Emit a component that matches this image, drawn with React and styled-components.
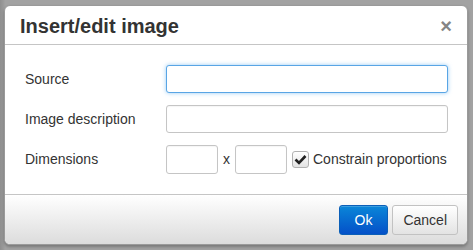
import React from "react";
import styled, { createGlobalStyle } from "styled-components";

const Global = createGlobalStyle`
  html, body {
    margin: 0;
    padding: 0;
    background: #a2a2a2;
    font-family: "Liberation Sans", Arial, sans-serif;
  }
`;

const Page = styled.div`
  width: 473px;
  height: 250px;
  overflow: hidden;
  display: flex;
  background: linear-gradient(to right, #8f8f8f 0, #9c9c9c 4px, #a2a2a2 5px);
`;

const Dialog = styled.div`
  margin: 5px 0 0 4px;
  width: 464px;
  height: 240px;
  box-sizing: border-box;
  background: #fff;
  border: 1px solid #9a9a9a;
  border-radius: 6px;
  box-shadow: 0 2px 3px rgba(0, 0, 0, 0.25);
  display: flex;
  flex-direction: column;
  overflow: hidden;
`;

const Header = styled.div`
  height: 38px;
  flex: none;
  display: flex;
  align-items: center;
  justify-content: space-between;
  padding: 0 15px 0 15px;
  border-bottom: 1px solid #c5c5c5;
`;

const Title = styled.div`
  font-size: 20px;
  font-weight: bold;
  color: #333;
  margin-top: 2px;
`;

const Close = styled.div`
  font-size: 20px;
  font-weight: bold;
  color: #858585;
  line-height: 1;
  margin-top: 2px;
`;

const Body = styled.div`
  flex: 1;
  padding: 20px 19px 0 20px;
  display: flex;
  flex-direction: column;
  gap: 12px;
`;

const Row = styled.div`
  display: flex;
  align-items: center;
  height: 28px;
  white-space: nowrap;
`;

const Label = styled.div`
  width: 141px;
  flex: none;
  font-size: 14px;
  color: #333;
`;

const Input = styled.div`
  box-sizing: border-box;
  height: ${(p) => (p.$tall ? 29 : 28)}px;
  width: ${(p) => (p.$w ? `${p.$w}px` : "auto")};
  flex: ${(p) => (p.$w ? "none" : 1)};
  border: 1px solid ${(p) => (p.$focus ? "#59a5e5" : "#c5c5c5")};
  border-radius: 3px;
  background: #fff;
  box-shadow: ${(p) =>
    p.$focus ? "0 0 4px rgba(82, 168, 236, 0.6)" : "inset 0 1px 1px rgba(0,0,0,0.04)"};
`;

const Times = styled.span`
  flex: none;
  font-size: 14px;
  color: #333;
  margin: 0 5px 0 5px;
`;

const Check = styled.div`
  flex: none;
  box-sizing: border-box;
  width: 17px;
  height: 17px;
  margin-left: 5px;
  border: 1px solid #b1b1b1;
  border-radius: 3px;
  background: linear-gradient(#fff, #e3e3e3);
  display: flex;
  align-items: center;
  justify-content: center;
`;

const CheckText = styled.span`
  flex: none;
  font-size: 14px;
  color: #333;
  margin-left: 4px;
`;

const Footer = styled.div`
  height: 50px;
  flex: none;
  box-sizing: border-box;
  border-top: 1px solid #c5c5c5;
  background: linear-gradient(#fff, #dcdcdc);
  display: flex;
  justify-content: flex-end;
  align-items: flex-start;
  padding: 10px 9px 0 0;
  gap: 4px;
`;

const Button = styled.div`
  box-sizing: border-box;
  height: 30px;
  padding: 0 ${(p) => (p.$primary ? 15 : 10)}px;
  display: flex;
  align-items: center;
  font-size: 14px;
  border-radius: 3px;
  border: 1px solid ${(p) => (p.$primary ? "#0b5fb8" : "#c2c2c2")};
  color: ${(p) => (p.$primary ? "#fff" : "#333")};
  background: ${(p) =>
    p.$primary ? "linear-gradient(#0a86d8, #0450c8)" : "linear-gradient(#fff, #e3e3e3)"};
  box-shadow: inset 0 1px 0 rgba(255, 255, 255, 0.2);
`;

export default function App() {
  return (
    <Page>
      <Global />
      <Dialog>
        <Header>
          <Title>Insert/edit image</Title>
          <Close>×</Close>
        </Header>
        <Body>
          <Row>
            <Label>Source</Label>
            <Input $focus />
          </Row>
          <Row>
            <Label>Image description</Label>
            <Input />
          </Row>
          <Row>
            <Label>Dimensions</Label>
            <Input $w={52} $tall />
            <Times>x</Times>
            <Input $w={52} $tall />
            <Check>
              <svg width="13" height="11" viewBox="0 0 13 11">
                <path d="M1.5 5.5 L5 9 L11.5 2" fill="none" stroke="#222" strokeWidth="2.6" />
              </svg>
            </Check>
            <CheckText>Constrain proportions</CheckText>
          </Row>
        </Body>
        <Footer>
          <Button $primary>Ok</Button>
          <Button>Cancel</Button>
        </Footer>
      </Dialog>
    </Page>
  );
}
